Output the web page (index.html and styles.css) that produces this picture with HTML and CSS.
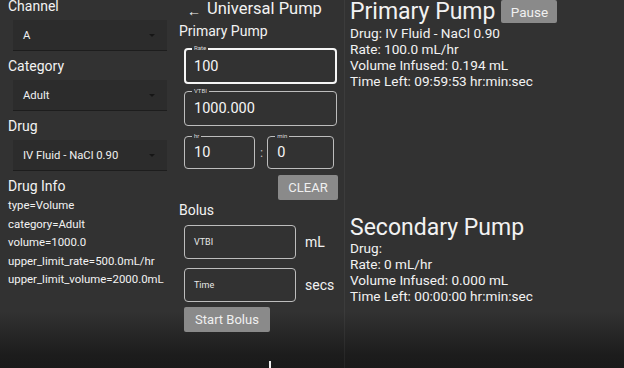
FILE: index.html
```html
<!DOCTYPE html>
<html>
<head>
<meta charset="utf-8">
<link rel="stylesheet" href="styles.css">
</head>
<body>
<div class="app">
  <div class="col-left">
    <div class="label">Channel</div>
    <div class="select"><span>A</span><span class="arrow"></span></div>
    <div class="label">Category</div>
    <div class="select"><span>Adult</span><span class="arrow"></span></div>
    <div class="label">Drug</div>
    <div class="select"><span>IV Fluid - NaCl 0.90</span><span class="arrow"></span></div>
    <div class="info-title">Drug Info</div>
    <div class="info-line">type=Volume</div>
    <div class="info-line">category=Adult</div>
    <div class="info-line">volume=1000.0</div>
    <div class="info-line">upper_limit_rate=500.0mL/hr</div>
    <div class="info-line">upper_limit_volume=2000.0mL</div>
  </div>
  <div class="col-mid">
    <div class="title"><span class="back">←</span><span>Universal Pump</span></div>
    <div class="section">Primary Pump</div>
    <div class="field field-rate focused"><span class="flabel">Rate</span><span class="value">100</span></div>
    <div class="field field-vtbi"><span class="flabel">VTBI</span><span class="value">1000.000</span></div>
    <div class="time-row">
      <div class="field field-small"><span class="flabel">hr</span><span class="value">10</span></div>
      <span class="colon">:</span>
      <div class="field field-small"><span class="flabel">min</span><span class="value">0</span></div>
    </div>
    <div class="clear-row"><button class="btn btn-clear">CLEAR</button></div>
    <div class="section bolus">Bolus</div>
    <div class="bolus-row">
      <div class="field field-bolus"><span class="placeholder">VTBI</span></div>
      <span class="unit">mL</span>
    </div>
    <div class="bolus-row second">
      <div class="field field-bolus"><span class="placeholder">Time</span></div>
      <span class="unit">secs</span>
    </div>
    <button class="btn btn-bolus">Start Bolus</button>
  </div>
  <div class="divider"></div>
  <div class="col-right">
    <div class="pump">
      <div class="pump-head"><span class="pump-title">Primary Pump</span><button class="btn btn-pause">Pause</button></div>
      <div class="pump-lines">
        <div>Drug: IV Fluid - NaCl 0.90</div>
        <div>Rate: 100.0 mL/hr</div>
        <div>Volume Infused: 0.194 mL</div>
        <div>Time Left: 09:59:53 hr:min:sec</div>
      </div>
    </div>
    <div class="pump secondary">
      <div class="pump-head"><span class="pump-title">Secondary Pump</span></div>
      <div class="pump-lines">
        <div>Drug:</div>
        <div>Rate: 0 mL/hr</div>
        <div>Volume Infused: 0.000 mL</div>
        <div>Time Left: 00:00:00 hr:min:sec</div>
      </div>
    </div>
  </div>
</div>
<div class="cursor"></div>
</body>
</html>
```
FILE: styles.css
```css
html, body {
  margin: 0;
  padding: 0;
  width: 624px;
  height: 368px;
  overflow: hidden;
}
body {
  background: linear-gradient(to bottom, #323232 0, #323232 312px, #262626 336px, #1c1c1c 356px, #1a1a1a 368px);
  color: #f2f2f2;
  font-family: Roboto, "Noto Sans", sans-serif;
  position: relative;
}
.app {
  display: flex;
  height: 368px;
}
.col-left {
  width: 175px;
  margin-top: -8px;
  display: flex;
  flex-direction: column;
  flex: none;
}
.label {
  height: 29px;
  line-height: 29px;
  font-size: 14px;
  padding-left: 8px;
}
.col-left .select {
  margin-top: -1px;
  margin-bottom: 1px;
}
.select {
  height: 31px;
  box-sizing: border-box;
  margin-left: 13px;
  width: 154px;
  background: #2c2c2c;
  border-bottom: 1px solid #1d1d1d;
  display: flex;
  align-items: center;
  justify-content: space-between;
  padding: 0 12px 0 10px;
  font-size: 11.3px;
  color: #f0f0f0;
}
.arrow {
  width: 0;
  height: 0;
  border-left: 3px solid transparent;
  border-right: 3px solid transparent;
  border-top: 3px solid #161616;
}
.info-title {
  margin-top: 4px;
  height: 20px;
  line-height: 20px;
  font-size: 14px;
  padding-left: 8px;
}
.info-line {
  height: 18.5px;
  line-height: 18.5px;
  font-size: 11.4px;
  padding-left: 8px;
}
.col-mid {
  width: 169px;
  flex: none;
  padding-left: 4px;
  box-sizing: border-box;
  display: flex;
  flex-direction: column;
  margin-top: -2px;
}
.title {
  height: 22px;
  line-height: 22px;
  font-size: 16.5px;
  display: flex;
  align-items: center;
}
.back {
  font-size: 14px;
  margin-left: 8px;
  margin-right: 6px;
  margin-top: 3px;
}
.section {
  height: 22px;
  line-height: 22px;
  font-size: 14px;
}
.field {
  position: relative;
  box-sizing: border-box;
  border: 1px solid #bdbdbd;
  border-radius: 4px;
  margin-left: 5px;
  display: flex;
  align-items: center;
  padding-left: 9px;
}
.field.focused {
  border: 2px solid #f5f5f5;
  padding-left: 8px;
}
.flabel {
  position: absolute;
  top: -5px;
  left: 7px;
  padding: 0 2px;
  font-size: 6px;
  line-height: 8px;
  background: #323232;
  color: #dcdcdc;
}
.focused .flabel {
  top: -6px;
  left: 6px;
}
.value {
  font-size: 14.5px;
  color: #f5f5f5;
}
.field-rate {
  margin-top: 6px;
  width: 153px;
  height: 36px;
}
.field-vtbi {
  margin-top: 7px;
  width: 153px;
  height: 35px;
}
.time-row {
  display: flex;
  align-items: center;
  margin-top: 10px;
}
.field-small {
  height: 33px;
  width: 71px;
}
.time-row .field-small + .colon + .field-small {
  margin-left: 4px;
  width: 67px;
}
.colon {
  margin-left: 5px;
  font-size: 13px;
  color: #bdbdbd;
}
.clear-row {
  display: flex;
  justify-content: flex-end;
  margin-top: 6px;
  padding-right: 6px;
}
.btn {
  border: none;
  border-radius: 2px;
  background: #8a8a8a;
  color: #f0f0f0;
  font-family: Roboto, "Noto Sans", sans-serif;
  font-size: 13px;
  padding: 0;
  cursor: default;
}
.btn-clear {
  width: 60px;
  height: 25px;
}
.section.bolus {
  height: 20px;
  line-height: 20px;
}
.bolus-row {
  display: flex;
  align-items: center;
  margin-top: 5px;
}
.bolus-row.second {
  margin-top: 9px;
}
.field-bolus {
  width: 112px;
  height: 34px;
}
.placeholder {
  font-size: 9px;
  color: #e8e8e8;
}
.unit {
  margin-left: 9px;
  font-size: 14px;
}
.btn-bolus {
  margin-top: 5px;
  margin-left: 5px;
  width: 86px;
  height: 25px;
  align-self: flex-start;
}
.divider {
  width: 1px;
  flex: none;
  background: rgba(255, 255, 255, 0.05);
}
.col-right {
  flex: 1;
  padding-left: 5px;
  display: flex;
  flex-direction: column;
}
.pump-head {
  display: flex;
  align-items: flex-start;
  height: 24px;
}
.pump-title {
  font-size: 23px;
  line-height: 24px;
}
.btn-pause {
  margin-left: 6px;
  width: 56px;
  height: 23px;
  font-size: 13.5px;
}
.pump-lines {
  margin-top: 1px;
  font-size: 13.6px;
  line-height: 16px;
}
.pump.secondary {
  margin-top: 127px;
}
.secondary .pump-lines {
  margin-top: 0;
}
.cursor {
  position: absolute;
  left: 269px;
  top: 361px;
  width: 2px;
  height: 7px;
  background: #f0f0f0;
}
```
